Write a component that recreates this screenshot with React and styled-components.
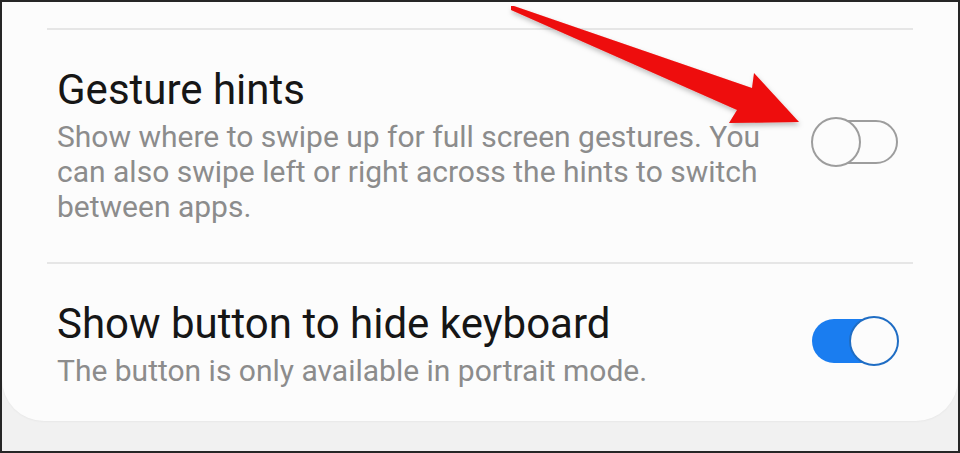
import { createGlobalStyle, styled } from 'styled-components';

const GlobalStyle = createGlobalStyle`
  html, body {
    margin: 0;
    padding: 0;
    background: #f1f1f1;
  }
  * {
    box-sizing: border-box;
  }
`;

const settings = [
  {
    title: 'Gesture hints',
    desc: 'Show where to swipe up for full screen gestures. You can also swipe left or right across the hints to switch between apps.',
    on: false,
  },
  {
    title: 'Show button to hide keyboard',
    desc: 'The button is only available in portrait mode.',
    on: true,
  },
];

const Toggle = ({ on }) => (
  <StyledTrack $on={on}>
    <StyledThumb $on={on} />
  </StyledTrack>
);

const Arrow = () => (
  <StyledArrow width='960' height='453' viewBox='0 0 960 453'>
    <defs>
      <filter id='arrowShadow' x='-10%' y='-10%' width='120%' height='130%'>
        <feDropShadow dx='1' dy='3' stdDeviation='2.5' floodColor='#000' floodOpacity='0.25' />
      </filter>
    </defs>
    <polygon
      points='511,6 514,6 752,88 754,73 799,122 729,123 737,110 511,10'
      fill='#ee0a0a'
      filter='url(#arrowShadow)'
    />
  </StyledArrow>
);

const App = () => {
  return (
    <>
      <GlobalStyle />
      <StyledFrame>
        <StyledCard>
          {settings.map((item) => (
            <div key={item.title}>
              <StyledDivider />
              <StyledRow>
                <StyledText>
                  <StyledTitle>{item.title}</StyledTitle>
                  <StyledDesc>{item.desc}</StyledDesc>
                </StyledText>
                <Toggle on={item.on} />
              </StyledRow>
            </div>
          ))}
        </StyledCard>
        <Arrow />
      </StyledFrame>
    </>
  );
};

export default App;

const StyledFrame = styled.div`
  position: relative;
  width: 960px;
  height: 453px;
  border: 2px solid #262626;
  background: #f1f1f1;
  overflow: hidden;
  font-family: Roboto, 'Noto Sans', sans-serif;
`;

const StyledCard = styled.div`
  background: #fcfcfc;
  height: 419px;
  padding-top: 26px;
  border-radius: 0 0 42px 42px;
  box-shadow: 0 1px 2px rgba(0, 0, 0, 0.04);
`;

const StyledDivider = styled.div`
  height: 2px;
  margin: 0 45px;
  background: #e6e6e6;
`;

const StyledRow = styled.div`
  display: flex;
  align-items: center;
  justify-content: space-between;
  padding: 38px 60px 38px 55px;
`;

const StyledText = styled.div`
  display: flex;
  flex-direction: column;
  gap: 7px;
  max-width: 745px;
`;

const StyledTitle = styled.div`
  font-size: 42px;
  line-height: 44px;
  color: #161616;
`;

const StyledDesc = styled.div`
  font-size: 30px;
  line-height: 35px;
  color: #8c8c8c;
`;

const StyledTrack = styled.div`
  position: relative;
  flex-shrink: 0;
  width: 86px;
  height: 44px;
  border-radius: 22px;
  border: ${({ $on }) => ($on ? 'none' : '2.5px solid #9d9d9d')};
  background: ${({ $on }) => ($on ? '#1a7df0' : 'transparent')};
  margin-top: ${({ $on }) => ($on ? '-8px' : '-8px')};
`;

const StyledThumb = styled.div`
  position: absolute;
  top: 50%;
  width: 50px;
  height: 50px;
  border-radius: 50%;
  transform: translateY(-50%);
  background: #fcfcfc;
  border: 2.5px solid ${({ $on }) => ($on ? '#1f6dc4' : '#9d9d9d')};
  left: ${({ $on }) => ($on ? '37px' : '-3px')};
`;

const StyledArrow = styled.svg`
  position: absolute;
  top: -2px;
  left: -2px;
  pointer-events: none;
`;
